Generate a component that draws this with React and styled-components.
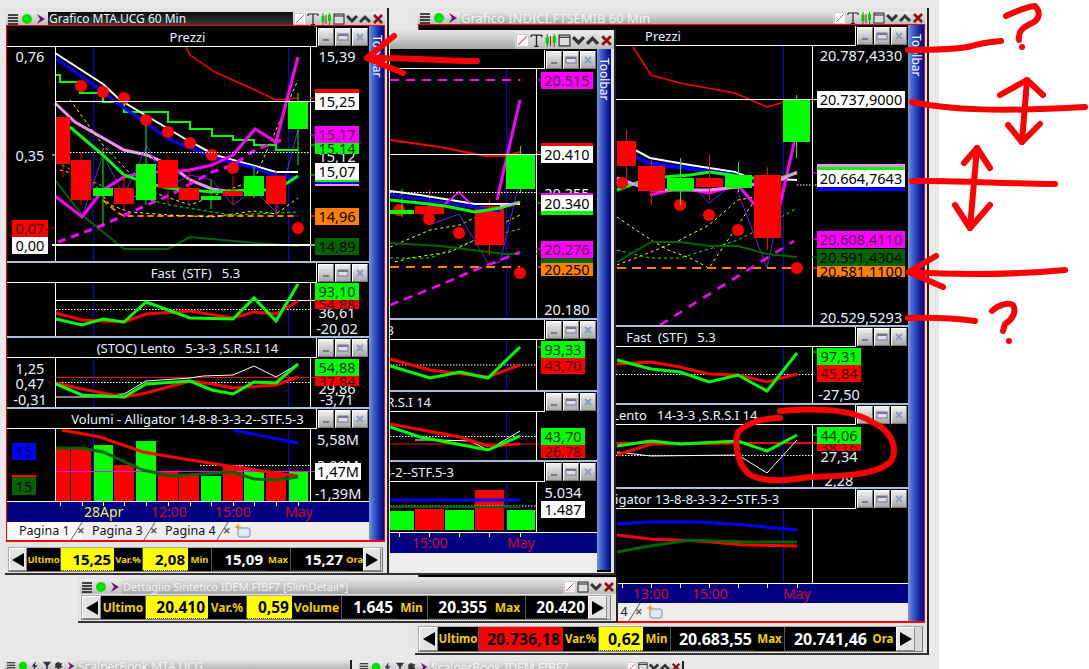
import React from 'react';
import styled, { createGlobalStyle } from 'styled-components';

const RED = '#ff0000';
const GRN = '#00ff00';
const DGR = '#006400';
const MAG = '#ff00ff';
const PNK = '#f090f0';
const BLU = '#0000ff';
const WHT = '#ffffff';
const YEL = '#ffff00';
const ORG = '#ff8000';
const PUR = '#7020e0';
const TXT = '#eaf2ff';
const ON_RED = '#400000';
const ON_GRN = '#003000';
const ON_MAG = '#500050';

const GlobalStyle = createGlobalStyle`
  html, body { margin: 0; padding: 0; background: #fff; overflow: hidden; }
  * { box-sizing: border-box; }
`;

const Desktop = styled.div`
  position: relative;
  width: 939px;
  height: 669px;
  overflow: hidden;
  background: #e8e8e8;
  font-family: "Noto Sans", "Open Sans", sans-serif;
`;

const Screen = styled.div`
  position: relative;
  width: 1089px;
  height: 669px;
  overflow: hidden;
`;

const Shell = styled.section`
  position: absolute;
  left: ${p => p.$x}px;
  top: ${p => p.$y}px;
  width: ${p => p.$w}px;
  height: ${p => p.$h}px;
  z-index: ${p => p.$z};
  padding: ${p => p.$pad};
  background: #e4e4e4;
  border-right: 2px solid #222;
  border-bottom: 2px solid #333;
  display: flex;
  flex-direction: column;
`;

const TitleBar = styled.header`
  display: flex;
  flex: none;
  height: ${p => p.$h}px;
  overflow: hidden;
  background: linear-gradient(#e4e4e4, #a6a6a6);
`;

const TitleIcons = styled.div`
  display: flex;
  flex: none;
  align-items: center;
  height: 100%;
  padding: 0 1px;
  gap: ${p => p.$gap || 1}px;
  background: linear-gradient(#ececec, #bdbdbd);
`;

const TitleText = styled.div`
  flex: 1;
  min-width: 0;
  height: 100%;
  display: flex;
  align-items: center;
  padding-left: 1px;
  font-size: ${p => p.$fs}px;
  white-space: nowrap;
  overflow: hidden;
  color: ${p => (p.$active ? '#e8f0ff' : '#f2f2f2')};
  background: ${p => (p.$active ? 'linear-gradient(#0c0c0c, #3a3a3a)' : 'transparent')};
`;

const Frame = styled.div`
  display: flex;
  flex: none;
  height: ${p => p.$h}px;
  width: ${p => p.$w}px;
  background: #000;
  border: ${p => (p.$plain ? '0' : `1px solid ${RED}`)};
  border-bottom-width: ${p => (p.$plain ? 0 : 2)}px;
`;

const Panes = styled.div`
  width: ${p => p.$w}px;
  flex: none;
  min-height: 0;
  padding-top: 1px;
  background: #000;
  display: flex;
  flex-direction: column;
`;

const Toolbar = styled.aside`
  flex: none;
  width: ${p => p.$w}px;
  margin-bottom: ${p => p.$mb || 0}px;
  padding-top: 9px;
  display: flex;
  justify-content: flex-start;
  align-items: center;
  background: linear-gradient(90deg, #7f97d8 0, #4468cc 25%, #12209c 75%, #000c86 100%);
  color: #fff;
  font-size: 12px;
  line-height: 1;
  writing-mode: vertical-rl;
`;

const Sep = styled.div`
  height: 2px;
  flex: none;
  background: #aebfd8;
`;

const PaneTitle = styled.div`
  display: flex;
  flex: none;
  height: ${p => p.$h || 20}px;
`;

const Caption = styled.div`
  flex: 1;
  min-width: 0;
  overflow: hidden;
  height: 100%;
  display: flex;
  align-items: center;
  justify-content: ${p => (p.$endPad ? 'flex-end' : 'center')};
  padding: ${p => (p.$endPad ? `0 ${p.$endPad}px 0 0` : `0 0 0 ${52 + (p.$shift || 0)}px`)};
  color: ${TXT};
  font-size: 13px;
  white-space: pre;
  border-right: 1px solid #fff;
  border-bottom: 1px solid #fff;
`;

const PaneBtns = styled.div`
  flex: none;
  display: flex;
  gap: 1px;
  width: 52px;
  padding: 1px 0 1px 1px;
`;

const PaneBtn = styled.button`
  width: 16px;
  height: 18px;
  padding: 0;
  border: 1px solid #fff;
  border-right-color: #777;
  border-bottom-color: #777;
  background: linear-gradient(#f0f0f0, #a8a8a8);
  display: flex;
  align-items: center;
  justify-content: center;
`;

const Plot = styled.div`
  position: relative;
  flex: none;
  overflow: hidden;
  height: ${p => p.$h}px;
  background: #000;
  svg { display: block; }
`;

const Tag = styled.span`
  position: absolute;
  left: ${p => p.$x}px;
  top: ${p => p.$y}px;
  width: ${p => p.$w}px;
  height: ${p => p.$h}px;
  display: flex;
  align-items: center;
  justify-content: center;
  font-size: 14.5px;
  line-height: 1;
  white-space: nowrap;
  overflow: ${p => (p.$bg === 'transparent' ? 'visible' : 'hidden')};
  background: ${p => p.$bg};
  color: ${p => p.$fg};
`;

const AxisBar = styled.div`
  position: relative;
  flex: none;
  height: ${p => p.$h}px;
  background: #000080;
  border-top: 1px solid #fff;
  svg { position: absolute; left: 0; top: 0; }
`;

const AxisLabel = styled.span`
  position: absolute;
  left: ${p => p.$x}px;
  top: 1px;
  font-size: 14px;
  line-height: 17px;
  color: ${p => p.$c};
`;

const TabStrip = styled.nav`
  flex: none;
  height: 18px;
  display: flex;
  overflow: hidden;
  background: #eee;
  align-items: stretch;
  padding-left: 1px;
`;

const Tab = styled.div`
  position: relative;
  flex: none;
  width: 73px;
  padding: 0 0 2px 11px;
  display: flex;
  align-items: center;
  gap: 7px;
  font-size: 12.5px;
  white-space: nowrap;
  color: #111;
  background: ${p => (p.$on ? '#fff' : 'transparent')};
  &::after {
    content: '';
    position: absolute;
    right: 4px;
    top: 0;
    bottom: 0;
    width: 1px;
    background: #555;
    transform: skewX(-32deg);
  }
`;

const TabClose = styled.span`
  font-size: 9px;
  font-weight: 700;
  color: #555;
`;

const NewTab = styled.div`
  display: flex;
  flex: none;
  align-items: center;
  padding-left: 6px;
`;

const Strip = styled.div`
  flex: 1;
  background: #eee;
`;

const Ticker = styled.div`
  display: flex;
  flex: none;
  width: ${p => p.$w}px;
  height: ${p => p.$h}px;
  margin: ${p => p.$m};
  background: #d8d8d8;
  border: 1px solid #aaa;
  border-right-color: #777;
  border-bottom-color: #777;
`;

const Arrow = styled.button`
  flex: none;
  width: ${p => p.$w}px;
  padding: 0;
  background: #e4e4e4;
  border: 1px solid #fff;
  border-right-color: #888;
  border-bottom-color: #888;
  display: flex;
  align-items: center;
  justify-content: center;
`;

const Cell = styled.div`
  flex: none;
  width: ${p => p.$w}px;
  display: flex;
  align-items: center;
  justify-content: ${p => (p.$label ? 'center' : 'flex-end')};
  padding-right: ${p => (p.$label ? 0 : 3)}px;
  font-weight: 700;
  white-space: nowrap;
  overflow: hidden;
  font-size: ${p => p.$fs}px;
  color: ${p => p.$fg};
  background: ${p => p.$bg};
  border-bottom: 1px dotted ${p => (p.$label ? '#000' : '#444')};
  border-left: ${p => (p.$label ? '0' : '1px solid #555')};
`;

const Overlay = styled.svg`
  position: absolute;
  left: 0;
  top: 0;
  z-index: 20;
  pointer-events: none;
`;

// little drawings for the window chrome
const ICONS = {
  menu: <path d="M1 2h10M1 5h10M1 8h10M1 11h10" stroke="#111" strokeWidth="1.3" />,
  dot: <circle cx="6" cy="6" r="5" fill="#00e000" />,
  play: <path d="M2 1l8 5-8 5 3-5z" fill="#701070" />,
  bolt: <path d="M7 0L2 7h3l-2 5 6-7H6z" fill="#334" />,
  filter: <path d="M1 1h10L7 6v5L5 12V6z" fill="#334" />,
  gear: <path d="M6 1l1 2 2-1 1 2-2 1 2 2-2 2-1-1-1 2-2-1-1-1-2 0 1-3-1-1 2-2z" fill="#333" />,
  slash: <g><rect x=".5" y=".5" width="11" height="11" fill="#fff" stroke="#ccc" /><path d="M2 10L10 2" stroke="#f05050" /></g>,
  text: <path d="M1 1h10M6 1v10M4 11.5h4M1 1v2M11 1v2" stroke="#222" strokeWidth="1.2" fill="none" />,
  candle: <g><path d="M3 0v12" stroke="#0a0" /><rect x="1.5" y="3" width="3" height="6" fill="#0c0" /><path d="M6 2v9" stroke="#c00" /><path d="M9.5 0v12" stroke="#0a0" /><rect x="8" y="2" width="3" height="6" fill="#0c0" /></g>,
  box: <g><rect x="1" y="1" width="10" height="10" fill="#ddd" stroke="#222" /><path d="M1 3h10" stroke="#222" /></g>,
  down: <path d="M1 3l5 5 5-5" fill="none" stroke="#333" strokeWidth="3" />,
  up: <path d="M1 9l5-5 5 5" fill="none" stroke="#333" strokeWidth="3" />,
  close: <path d="M2 2l8 8M10 2l-8 8" stroke="#8a1010" strokeWidth="2.6" />,
};

const Icon = ({ name, size = 12 }) => (
  <svg width={size} height={size} viewBox="0 0 12 12">{ICONS[name]}</svg>
);

const LEFT = ['menu', 'dot', 'play'];
const RIGHT = ['slash', 'text', 'candle', 'box', 'down', 'up', 'close'];

const Title = ({ h, text, active, fs = 13, left = LEFT, right = RIGHT, size = 12 }) => (
  <TitleBar $h={h}>
    {left.length > 0 && (
      <TitleIcons $gap={2}>{left.map(n => <Icon key={n} name={n} size={size} />)}</TitleIcons>
    )}
    <TitleText $active={active} $fs={fs}>{text}</TitleText>
    {right.length > 0 && (
      <TitleIcons $gap={1}>{right.map(n => <Icon key={n} name={n} size={size} />)}</TitleIcons>
    )}
  </TitleBar>
);

const PaneHead = ({ title, shift, endPad, h }) => (
  <PaneTitle $h={h}>
    <Caption $shift={shift} $endPad={endPad}>{title}</Caption>
    <PaneBtns>
      <PaneBtn><svg width="10" height="10" viewBox="0 0 10 10"><path d="M2 8h6" stroke="#778" strokeWidth="2" /></svg></PaneBtn>
      <PaneBtn><svg width="12" height="10" viewBox="0 0 12 10"><rect x="1" y="2" width="10" height="6" fill="#dde" stroke="#778" strokeWidth="1" /><path d="M1 3h10" stroke="#778" strokeWidth="2" /></svg></PaneBtn>
      <PaneBtn><svg width="10" height="10" viewBox="0 0 10 10"><path d="M2 2l6 6M8 2l-6 6" stroke="#8a9ac0" strokeWidth="2" /></svg></PaneBtn>
    </PaneBtns>
  </PaneTitle>
);

// chart coordinates below are kept in page pixels, the viewBox shifts them into the plot
const Chart = ({ ox, oy, w, h, spec }) => (
  <Plot $h={h}>
    <svg width={w} height={h} viewBox={`${ox} ${oy} ${w} ${h}`}>
      {(spec.under || []).map(([x1, x2, top, bot, c], i) => (
        <rect key={i} x={x1} y={top} width={x2 - x1} height={bot - top} fill={c} />
      ))}
      {(spec.lines || []).map(([pts, c, sw, dash], i) => (
        <polyline key={i} points={pts} fill="none" stroke={c} strokeWidth={sw} strokeDasharray={dash} />
      ))}
      {(spec.dots || []).map(([x, y], i) => <circle key={i} cx={x} cy={y} r="6" fill={RED} />)}
      {(spec.candles || []).map(([x1, x2, top, bot, wt, wb, c], i) => (
        <g key={i}>
          <line x1={(x1 + x2) / 2} x2={(x1 + x2) / 2} y1={wt} y2={wb} stroke={c} />
          <rect x={x1} y={top} width={x2 - x1} height={bot - top} fill={c} />
        </g>
      ))}
      {(spec.over || []).map(([pts, c, sw, dash], i) => (
        <polyline key={i} points={pts} fill="none" stroke={c} strokeWidth={sw} strokeDasharray={dash} />
      ))}
    </svg>
    {(spec.tags || []).map(([text, x, y, tw, th, bg, fg], i) => (
      <Tag key={i} $x={x - ox} $y={y - oy} $w={tw} $h={th} $bg={bg || 'transparent'} $fg={fg || TXT}>{text}</Tag>
    ))}
  </Plot>
);

const Axis = ({ ox, w, h, ticks, labels }) => (
  <AxisBar $h={h}>
    <svg width={w} height="5" viewBox={`${ox} 0 ${w} 5`}>
      {ticks.map(x => <line key={x} x1={x + 0.5} x2={x + 0.5} y1="0" y2="4" stroke="#fff" />)}
    </svg>
    {labels.map(([t, x, c]) => <AxisLabel key={t} $x={x - ox} $c={c}>{t}</AxisLabel>)}
  </AxisBar>
);

const Tabs = () => (
  <TabStrip>
    {['Pagina 1', 'Pagina 3', 'Pagina 4'].map((t, i) => (
      <Tab key={t} $on={i === 0}>{t}<TabClose>✕</TabClose></Tab>
    ))}
    <NewTab>
      <svg width="18" height="16" viewBox="0 0 18 16">
        <rect x="5" y="5" width="12" height="9" rx="2" fill="#dfe8f5" stroke="#7a8aa5" />
        <path d="M5 0l1 3 3 1-3 1-1 3-1-3-3-1 3-1z" fill="#e8a020" />
      </svg>
    </NewTab>
  </TabStrip>
);

const Tick = ({ w, h, m, arrow, lab, val, cells }) => (
  <Ticker $w={w} $h={h} $m={m}>
    <Arrow $w={arrow}><svg width="12" height="14" viewBox="0 0 12 14"><path d="M12 0v14L0 7z" fill="#000" /></svg></Arrow>
    {cells.map(([text, cw, bg], i) => (
      bg === undefined
        ? <Cell key={i} $label $w={cw} $fs={lab} $fg="#f0d000" $bg="#000">{text}</Cell>
        : <Cell key={i} $w={cw} $fs={val} $bg={bg} $fg={bg === '#000' ? '#fff' : '#000'}>{text}</Cell>
    ))}
    <Arrow $w={arrow}><svg width="12" height="14" viewBox="0 0 12 14"><path d="M0 0v14L12 7z" fill="#000" /></svg></Arrow>
  </Ticker>
);

const DASH_S = '3 3';
const DOT = '1.5 1.5';

const mtaPrice = {
  lines: [
    ['93.5,47 93.5,261', BLU, 1], ['288.5,47 288.5,261', BLU, 1],
    ['186,47 190,55 215,72 255,90 276,100 298,98', RED, 1.5],
    ['55,103 75,122 103,138 124,150 147,155 170,165 190,180 212,189 233,192', PNK, 3],
    ['103,200 117,212 124,216 298,216', ORG, 2, '6 4'],
    ['60,170 90,178 110,205 130,212 170,215 212,217 254,211 276,214 298,198', YEL, 1, DASH_S],
    ['62,165 110,190 170,205 212,212 233,215 298,212', GRN, 1, DASH_S],
    ['70,100 103,145 146,190 190,205 254,180 298,80', YEL, 1, DASH_S],
    ['82,217 103,155 124,195 147,146 168,187 190,175 212,180 233,205 254,190 276,212 298,130', PUR, 1],
    ['55,180 82,215 103,232 124,249 168,249 190,237 212,239 255,243 298,246', DGR, 2],
    ['56,75 60,75 60,82 80,82 80,93 103,93 103,102 124,102 124,112 168,112 168,122 190,122 190,129 212,129 212,136 233,136 233,140 254,140 254,145 276,145 276,150 298,150', GRN, 2],
    ['55,53 103,84 120,100 187,140 215,155 255,166 276,172 298,172', WHT, 2],
    ['55,58 98,88 120,105 170,140 215,158 255,168 276,176 298,178', BLU, 3],
    ['55,196 82,217 103,190 124,177 147,172 170,172 190,170 212,165 233,155 255,129 276,142 298,57', MAG, 3],
    ['58,242 103,225 147,205 170,195 212,172 233,165 255,150 287,138', MAG, 3, '8 6'],
    ['70,127 103,155 124,175 147,183 168,188 212,192 254,190 276,190 298,176', GRN, 3],
    ['52,228 55,228', RED, 1], ['52,245 55,245', WHT, 1], ['52,155 55,155', WHT, 1],
  ],
  dots: [[81, 86], [103, 92], [124, 98], [146, 120], [168, 132], [190, 143], [212, 155], [233, 168], [298, 228]],
  candles: [
    [56, 70, 117, 164, 117, 177, RED], [71, 91, 160, 200, 152, 205, RED], [93, 113, 188, 196, 148, 225, GRN],
    [114, 134, 188, 204, 175, 209, RED], [136, 156, 164, 200, 125, 205, GRN], [158, 178, 160, 188, 156, 204, RED],
    [179, 199, 188, 200, 170, 205, RED], [201, 221, 196, 200, 180, 209, GRN], [223, 243, 191, 196, 176, 205, RED],
    [244, 264, 176, 196, 165, 198, GRN], [266, 286, 176, 204, 170, 215, RED], [288, 308, 102, 129, 93, 165, GRN],
  ],
  over: [
    ['55,101.5 315,101.5', WHT, 1], ['70,152.5 310,152.5', WHT, 1, DOT], ['52,245 315,245', WHT, 2],
    ['55.5,47 55.5,261', WHT, 1], ['310.5,47 310.5,261', WHT, 1],
    ['310,98 315,98', RED, 1], ['310,135 315,135', MAG, 1], ['310,145 315,145', GRN, 1], ['310,175 315,175', GRN, 1],
    ['310,216 315,216', ORG, 1], ['310,245 315,245', DGR, 1],
  ],
  tags: [
    ['0,76', 12, 47, 36, 18], ['0,35', 12, 146, 36, 18],
    ['0,07', 12, 220, 36, 17, RED, ON_RED], ['0,00', 12, 237, 36, 17, WHT, '#000'],
    ['15,39', 315, 47, 44, 18],
    ['', 315, 89, 44, 4, RED], ['15,25', 315, 93, 44, 17, WHT, '#000'],
    ['15,12', 315, 147, 44, 18],
    ['15,14', 315, 143, 44, 11, GRN, ON_GRN], ['15,17', 315, 126, 44, 17, MAG, ON_MAG],
    ['', 315, 180, 44, 2, GRN], ['', 315, 182, 44, 2, BLU], ['', 315, 184, 44, 2, PNK],
    ['15,07', 315, 163, 44, 17, WHT, '#000'],
    ['14,96', 315, 208, 44, 17, ORG, '#000'], ['14,89', 315, 238, 44, 17, DGR, '#000'],
  ],
};

const mtaFast = {
  lines: [
    ['93.5,283 93.5,336', BLU, 1], ['288.5,283 288.5,336', BLU, 1],
    ['56,300.5 315,300.5', WHT, 1], ['56,309.5 310,309.5', WHT, 1, DOT],
    ['56,313 82,320 124,322 146,314 190,311 233,318 254,312 276,314 298,301', RED, 3],
    ['56,319 82,325 103,319 124,322 146,302 190,318 233,319 254,298 276,321 298,284', GRN, 3],
    ['55.5,283 55.5,336', WHT, 1], ['310.5,283 310.5,336', WHT, 1],
  ],
  tags: [
    ['36,61', 315, 303, 44, 18], ['54,88', 315, 300, 44, 9, RED, ON_RED], ['93,10', 315, 283, 44, 17, GRN, ON_GRN],
    ['-20,02', 315, 319, 44, 18],
  ],
};

const mtaStoc = {
  lines: [
    ['93.5,358 93.5,407', BLU, 1], ['288.5,358 288.5,407', BLU, 1],
    ['55,377.5 315,377.5', RED, 1], ['56,382.5 310,382.5', WHT, 1, DOT], ['55,397 124,397', WHT, 1],
    ['56,384 82,396 124,394 146,381 190,378 203,376 233,375 254,366 276,377 298,364', WHT, 1],
    ['56,383 82,389 124,397 146,393 190,381 212,384 233,388 276,385 298,377', RED, 3],
    ['56,384 82,395 124,397 146,384 190,381 212,390 233,394 254,382 276,383 298,364', GRN, 3],
    ['55.5,358 55.5,407', WHT, 1], ['310.5,358 310.5,407', WHT, 1],
  ],
  tags: [
    ['1,25', 12, 360, 36, 16], ['0,47', 12, 375, 36, 16], ['-0,31', 12, 391, 36, 16],
    ['29,86', 315, 380, 44, 16], ['37,84', 315, 376, 44, 10, RED, ON_RED], ['54,88', 315, 359, 44, 17, GRN, ON_GRN],
    ['-3,71', 315, 391, 44, 16],
  ],
};

const mtaVol = {
  under: [
    [56, 70, 449, 501, RED], [71, 91, 449, 501, RED], [93, 113, 445, 501, GRN], [114, 134, 465, 501, RED],
    [136, 156, 441, 501, GRN], [158, 178, 471, 501, RED], [179, 199, 475, 501, RED], [201, 221, 476, 501, GRN],
    [223, 243, 465, 501, RED], [244, 264, 470, 501, GRN], [266, 286, 473, 501, RED], [288, 308, 472, 501, GRN],
  ],
  lines: [
    ['93.5,429 93.5,501', BLU, 1], ['288.5,429 288.5,501', BLU, 1],
    ['200,465.5 310,465.5', WHT, 1, DOT], ['55,471.5 315,471.5', MAG, 1],
    ['62,430 100,437 143,452 190,460 255,470 298,476', RED, 3],
    ['233,430 298,443', BLU, 3],
    ['56,448 82,448 103,452 143,470 170,476 233,472 254,479 276,480 298,477', DGR, 3],
    ['55.5,429 55.5,501', WHT, 1], ['310.5,429 310.5,501', WHT, 1],
  ],
  tags: [
    ['15', 12, 443, 24, 17, BLU, '#000040'], ['', 12, 475, 24, 2, RED], ['15', 12, 477, 24, 18, DGR, '#000'],
    ['5,58M', 315, 430, 46, 18], ['3,09M', 315, 456, 46, 18], ['1,47M', 315, 463, 46, 17, WHT, '#000'], ['-1,39M', 315, 484, 46, 18],
  ],
};

const fibPrice = {
  lines: [
    ['506.5,69 506.5,318', BLU, 1],
    ['390,140 440,147 485,156 505,156 520,152', RED, 2],
    ['390,80 520,80', MAG, 2, '9 7'],
    ['390,267 520,267', ORG, 2, '9 7'],
    ['390,247 430,230 460,225 490,210', YEL, 1, DASH_S], ['395,262 410,258 450,252 475,240 500,225 520,215', YEL, 1, DASH_S],
    ['390,258 430,258 475,240 520,229', GRN, 1, DASH_S],
    ['420,205 429,225 459,214 489,265 500,262 520,180', PUR, 1],
    ['390,243 440,246 505,254 520,254', DGR, 2],
    ['390,305 440,285 470,272 520,252', MAG, 2.5, '9 6'],
    ['497,200 520,100', MAG, 3],
  ],
  dots: [[399, 210], [429, 219], [459, 233], [520, 273]],
  candles: [[390, 414, 210, 214, 189, 217, GRN], [415, 444, 206, 214, 190, 222, RED], [475, 504, 206, 245, 199, 255, RED], [506, 535, 155, 189, 146, 193, GRN]],
  over: [
    ['390,191 420,195 475,204 520,204', WHT, 2], ['390,195 420,199 475,207 500,211', BLU, 3],
    ['390,200 420,203 445,206 475,212 500,208 520,202', GRN, 3], ['445,204 459,192 470,203', MAG, 2], ['500,206 520,203', PNK, 2],
    ['390,154.5 541,154.5', WHT, 1], ['390,192.5 536,192.5', WHT, 1, DOT], ['536.5,69 536.5,318', WHT, 1],
    ['536,80 541,80', MAG, 1], ['536,152 541,152', RED, 1], ['536,203 541,203', GRN, 1], ['536,249 541,249', MAG, 1], ['536,254 541,254', DGR, 1], ['536,267 541,267', ORG, 1],
  ],
  tags: [
    ['20.515', 541, 72, 52, 17, MAG, ON_MAG],
    ['', 541, 143, 52, 3, RED], ['20.410', 541, 146, 52, 17, WHT, '#000'],
    ['20.355', 541, 184, 52, 18],
    ['', 541, 193, 52, 2, MAG], ['20.340', 541, 195, 52, 16, WHT, '#000'], ['', 541, 211, 52, 4, GRN],
    ['20.276', 541, 241, 52, 17, MAG, ON_MAG], ['', 541, 258, 52, 5, DGR],
    ['20.250', 541, 263, 52, 13, ORG, '#000'],
    ['20.180', 541, 300, 52, 18],
  ],
};

const fibFast = {
  lines: [
    ['506.5,340 506.5,390', BLU, 1], ['390,365 536,365', WHT, 1, DOT],
    ['390,359 430,370 488,377 520,365', RED, 3], ['390,366 430,378 460,372 488,378 520,347', GRN, 3],
    ['536.5,340 536.5,390', WHT, 1], ['536,347 541,347', GRN, 1],
  ],
  tags: [['43,70', 541, 357, 44, 17, RED, ON_RED], ['93,33', 541, 341, 44, 17, GRN, ON_GRN]],
};

const fibRsi = {
  lines: [
    ['506.5,412 506.5,460', BLU, 1], ['390,436.5 536,436.5', WHT, 1, DOT], ['390,444 541,444', RED, 1],
    ['415,440 440,440 470,441 488,450 520,431', WHT, 1],
    ['390,424 460,437 488,446 520,444', RED, 3], ['390,427 420,437 488,450 520,436', GRN, 3],
    ['536.5,412 536.5,460', WHT, 1],
  ],
  tags: [['26,78', 541, 445, 44, 13, RED, ON_RED], ['43,70', 541, 428, 44, 17, GRN, ON_GRN]],
};

const fibVol = {
  under: [[390, 414, 511, 530, GRN], [415, 444, 509, 530, RED], [445, 474, 510, 530, GRN], [475, 504, 490, 530, RED], [506, 535, 510, 530, GRN]],
  lines: [
    ['506.5,482 506.5,532', BLU, 1], ['390,506 536,506', WHT, 1, DOT], ['390,500 520,500', BLU, 3], ['390,507 520,507', DGR, 2],
    ['536.5,482 536.5,532', WHT, 1],
  ],
  tags: [['5.034', 541, 483, 44, 18], ['1.487', 541, 501, 44, 17, WHT, '#000']],
};

const ftsePrice = {
  lines: [
    ['783.5,46 783.5,325', BLU, 1],
    ['633,47 651,75 680,83 735,93 767,107 784,102', RED, 1.5],
    ['617,217 651,240 668,250 690,258 709,268 738,225 755,200 781,205', YEL, 1, DASH_S],
    ['617,265 651,252 680,240 709,225 738,200 767,195', YEL, 1, DASH_S],
    ['617,250 650,258 680,258 738,240 767,225 797,208', GRN, 1, DASH_S],
    ['737,190 767,268 797,130', PUR, 1], ['690,180 709,203 738,180', PUR, 1],
    ['617,262 651,242 680,242 710,246 738,246 767,254 797,257', DGR, 2],
    ['617,268 795,268', ORG, 2, '9 6'],
    ['660,325 794,241', MAG, 2.5, '9 8'],
    ['635,150 650,158 690,165 735,172 750,178 797,180', WHT, 2],
    ['617,150 650,163 735,175 755,183', BLU, 4],
    ['650,195 680,188 709,193 738,185 755,205 780,205 797,130', MAG, 3],
    ['617,190 650,178 690,175 710,172 750,178 780,178 797,173', GRN, 3],
    ['617,178 650,190 709,190 738,187 780,180 797,172', PNK, 3],
  ],
  dots: [[622, 183], [680, 205], [709, 215], [738, 230], [797, 268]],
  candles: [
    [617, 636, 141, 166, 130, 180, RED], [638, 665, 166, 191, 160, 205, RED], [667, 694, 178, 191, 158, 205, GRN],
    [696, 723, 178, 187, 155, 200, RED], [725, 752, 175, 188, 162, 192, GRN], [754, 781, 175, 238, 167, 250, RED],
    [783, 810, 100, 142, 95, 158, GRN],
  ],
  over: [
    ['616,99.5 817,99.5', WHT, 1], ['797,185 817,185', WHT, 1, DOT], ['812.5,46 812.5,325', WHT, 1],
    ['812,173 817,173', MAG, 1], ['812,239 817,239', MAG, 1], ['812,257 817,257', DGR, 1], ['812,268 817,268', ORG, 1],
  ],
  tags: [
    ['20.787,4330', 817, 46, 88, 18], ['20.737,9000', 817, 91, 88, 17, WHT, '#000'],
    ['', 817, 164, 88, 3, PNK], ['', 817, 167, 88, 3, GRN], ['', 817, 187, 88, 4, BLU],
    ['20.664,7643', 817, 170, 88, 17, WHT, '#000'],
    ['20.581,1100', 817, 266, 88, 11, ORG, '#000'],
    ['20.608,4110', 817, 231, 88, 17, MAG, ON_MAG], ['20.591,4304', 817, 249, 88, 17, DGR, '#000'],
    ['20.529,5293', 817, 308, 88, 18],
  ],
};

const ftseFast = {
  lines: [
    ['783.5,347 783.5,403', BLU, 1], ['616,374.5 812,374.5', WHT, 1, DOT],
    ['617,364 651,362 680,367 709,374 738,375 767,382 797,374', RED, 3],
    ['617,360 651,369 680,372 709,382 738,375 767,391 797,353', GRN, 3],
    ['812.5,347 812.5,403', WHT, 1], ['812,352 817,352', GRN, 1],
  ],
  tags: [['97,31', 817, 348, 44, 17, GRN, ON_GRN], ['45,84', 817, 365, 44, 17, RED, ON_RED], ['-27,50', 817, 385, 44, 18]],
};

const ftseLento = {
  lines: [
    ['783.5,425 783.5,487', BLU, 1], ['616,455.5 812,455.5', WHT, 1, DOT], ['616,443 817,443', RED, 2],
    ['617,452 651,456 738,455 767,473 797,440', WHT, 1],
    ['617,455 651,444 738,443', RED, 3],
    ['617,446 651,441 680,444 738,441 767,451 797,435', GRN, 3],
    ['812.5,425 812.5,487', WHT, 1], ['812,435 817,435', GRN, 1],
  ],
  tags: [
    ['2,28', 817, 471, 44, 18], ['27,34', 817, 447, 44, 18],
    ['38,16', 817, 444, 44, 7, RED, ON_RED], ['44,06', 817, 427, 44, 17, GRN, ON_GRN],
  ],
};

const ftseGator = {
  lines: [
    ['783.5,509 783.5,583', BLU, 1],
    ['617,524 650,522 700,522 745,525 797,530', BLU, 3],
    ['617,535 650,539 700,541 745,545 797,546', RED, 3],
    ['617,552 650,546 690,540 745,542 797,542', DGR, 3],
    ['812.5,509 812.5,583', WHT, 1],
  ],
};

const ANNOTATIONS = [
  'M477 61 C440 61 410 57 367 58', 'M394 36 L367 58 L403 73',
  'M908 50 C940 50 960 49 972 46 C980 43 990 42 1001 41',
  'M1006 16 C1015 12 1025 7 1035 6 C1041 12 1040 20 1030 24 C1022 28 1018 32 1019 40',
  'M912 102 C950 110 1000 112 1085 107',
  'M1027 80 L1022 142', 'M1000 95 L1027 80 L1043 95', 'M1008 125 L1022 142 L1040 124',
  'M912 181 C960 180 1005 184 1055 184',
  'M977 148 L970 228', 'M964 163 L977 148 L990 168', 'M955 205 L970 228 L990 205',
  'M909 272 C970 276 1020 274 1065 270', 'M936 256 L909 272 L943 287',
  'M908 318 C940 317 960 319 975 321',
  'M992 311 C998 305 1008 302 1013 305 C1017 312 1012 320 1005 324 L1003 331',
  'M780 411 C810 408 850 408 872 422 C890 430 898 445 892 460 C880 474 850 476 810 477 C790 480 770 483 752 476 C738 468 734 445 738 432 C748 422 765 418 780 418',
];

const App = () => (
  <Screen>
    <GlobalStyle />
    <Desktop>
      <Shell $x={5} $y={8} $w={384} $h={567} $z={2} $pad="4px 2px 0 1px">
        <Title h={13} text="Grafico MTA.UCG 60 Min" active fs={12} />
        <Frame $h={517} $w={379}>
          <Panes $w={362}>
            <PaneHead title="Prezzi" />
            <Chart ox={7} oy={47} w={362} h={214} spec={mtaPrice} />
            <Sep />
            <PaneHead title="Fast  (STF)   5.3" shift={16} />
            <Chart ox={7} oy={283} w={362} h={53} spec={mtaFast} />
            <Sep />
            <PaneHead title="(STOC) Lento   5-3-3 ,S.R.S.I 14" />
            <Chart ox={7} oy={358} w={362} h={49} spec={mtaStoc} />
            <Sep />
            <PaneHead title="Volumi - Alligator 14-8-8-3-3-2--STF.5-3" />
            <Chart ox={7} oy={429} w={362} h={72} spec={mtaVol} />
            <Axis ox={7} w={362} h={21}
              ticks={[60, 82, 103, 124, 146, 168, 190, 211, 233, 254, 276, 298]}
              labels={[['28Apr', 84, '#f0f060'], ['12:00', 151, '#d80030'], ['15:00', 215, '#d80030'], ['May', 285, '#d80030']]} />
            <Tabs />
          </Panes>
          <Toolbar $w={15}>Toolbar</Toolbar>
        </Frame>
        <Tick w={375} h={25} m="5px 0 0 2px" arrow={18} lab={9.5} val={15}
          cells={[['Ultimo', 33], ['15,25', 54, YEL], ['Var.%', 28], ['2,08', 46, YEL], ['Min', 23], ['15,09', 55, '#000'], ['Max', 24], ['15,27', 56, '#000'], ['Ora', 17]]} />
      </Shell>

      <Shell $x={415} $y={8} $w={514} $h={647} $z={1} $pad="4px 2px 0 3px">
        <Title h={12} text="Grafico INDICI.FTSEMIB 60 Min" fs={13} />
        <Frame $h={599} $w={507}>
          <Panes $w={489}>
            <PaneHead title="Prezzi" />
            <Chart ox={419} oy={46} w={489} h={279} spec={ftsePrice} />
            <Sep />
            <PaneHead title="Fast  (STF)   5.3" shift={16} />
            <Chart ox={419} oy={347} w={489} h={56} spec={ftseFast} />
            <Sep />
            <PaneHead title="(STOC) Lento   14-3-3 ,S.R.S.I 14" />
            <Chart ox={419} oy={425} w={489} h={62} spec={ftseLento} />
            <Sep />
            <PaneHead title="Volumi - Alligator 13-8-8-3-3-2--STF.5-3" />
            <Chart ox={419} oy={509} w={489} h={74} spec={ftseGator} />
            <Axis ox={419} w={489} h={20}
              ticks={[622, 651, 680, 709, 738, 767, 797]}
              labels={[['13:00', 633, '#d80030'], ['15:00', 692, '#d80030'], ['May', 783, '#d80030']]} />
            <Tabs />
          </Panes>
          <Toolbar $w={16}>Toolbar</Toolbar>
        </Frame>
        <Tick w={505} h={26} m="3px 0 0 0" arrow={19} lab={11.5} val={16}
          cells={[['Ultimo', 40], ['20.736,18', 85, RED], ['Var.%', 35], ['0,62', 45, YEL], ['Min', 27], ['20.683,55', 85, '#000'], ['Max', 29], ['20.741,46', 86, '#000'], ['Ora', 26]]} />
      </Shell>

      <Shell $x={389} $y={30} $w={227} $h={545} $z={3} $pad="1px 0 0 1px">
        <Title h={18} text="" left={[]} size={13} />
        <Frame $plain $h={523} $w={221}>
          <Panes $w={207}>
            <PaneHead title="" h={19} />
            <Chart ox={390} oy={69} w={207} h={249} spec={fibPrice} />
            <Sep />
            <PaneHead title="Fast  (STF)   5.3" endPad={150} />
            <Chart ox={390} oy={340} w={207} h={50} spec={fibFast} />
            <Sep />
            <PaneHead title="(STOC) Lento   5-3-3 ,S.R.S.I 14" endPad={113} />
            <Chart ox={390} oy={412} w={207} h={48} spec={fibRsi} />
            <Sep />
            <PaneHead title="Volumi - Alligator 14-8-8-3-3-2--STF.5-3" endPad={90} />
            <Chart ox={390} oy={482} w={207} h={50} spec={fibVol} />
            <Axis ox={390} w={207} h={21}
              ticks={[399, 429, 459, 489, 520]}
              labels={[['15:00', 412, '#d80030'], ['May', 507, '#d80030']]} />
            <Strip />
          </Panes>
          <Toolbar $w={14} $mb={2}>Toolbar</Toolbar>
        </Frame>
      </Shell>

      <Shell $x={78} $y={577} $w={540} $h={46} $z={4} $pad="2px 0 0 2px">
        <Title h={15} text="Dettaglio Sintetico IDEM.FIBF7 [SlimDetail*]" fs={11} right={['slash', 'box', 'down', 'close']} />
        <Tick w={530} h={25} m="1px 0 0 1px" arrow={19} lab={12} val={15.5}
          cells={[['Ultimo', 44], ['20.410', 63, YEL], ['Var.%', 38], ['0,59', 46, YEL], ['Volume', 49], ['1.645', 55, '#000'], ['Min', 31], ['20.355', 63, '#000'], ['Max', 35], ['20.420', 63, '#000']]} />
      </Shell>

      <Shell $x={5} $y={660} $w={347} $h={12} $z={1} $pad="0">
        <Title h={12} text="ScalperBook MTA.UCG" fs={12} left={['menu', 'dot', 'bolt', 'filter', 'gear', 'play']} right={[]} size={10} />
      </Shell>
      <Shell $x={358} $y={661} $w={326} $h={12} $z={1} $pad="0">
        <Title h={12} text="ScalperBook IDEM.FIBF7" fs={12} left={['menu', 'dot', 'bolt', 'filter', 'gear', 'play']} right={['slash', 'box', 'down', 'up', 'close']} size={10} />
      </Shell>
    </Desktop>

    <Overlay width="1089" height="669" viewBox="0 0 1089 669" fill="none" stroke={RED} strokeWidth="6" strokeLinecap="round" strokeLinejoin="round">
      {ANNOTATIONS.map(d => <path key={d} d={d} />)}
      <circle cx="1022" cy="47" r="3" fill={RED} stroke="none" />
      <circle cx="1009" cy="341" r="3" fill={RED} stroke="none" />
    </Overlay>
  </Screen>
);

export default App;
